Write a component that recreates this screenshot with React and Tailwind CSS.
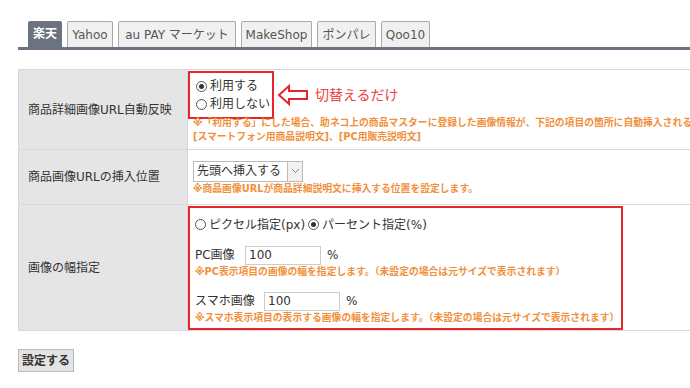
import React from 'react'

const FONT = { fontFamily: '"DejaVu Sans", "Noto Sans CJK JP", sans-serif' }

const tabs = [
  { label: '楽天', w: 'w-[34px]' },
  { label: 'Yahoo', w: 'w-[46px]' },
  { label: 'au PAY マーケット', w: 'w-[118px]' },
  { label: 'MakeShop', w: 'w-[71px]' },
  { label: 'ポンパレ', w: 'w-[59px]' },
  { label: 'Qoo10', w: 'w-[49px]' },
]

function Radio({ checked, label }) {
  return (
    <label className="flex items-center gap-[3px] whitespace-nowrap">
      <span className="flex h-[11px] w-[11px] items-center justify-center rounded-full border border-[#555] bg-white">
        {checked && <span className="h-[5px] w-[5px] rounded-full bg-[#333]" />}
      </span>
      <span>{label}</span>
    </label>
  )
}

function Note({ children }) {
  return <p className="whitespace-nowrap text-[9.8px] font-bold leading-[14px] text-[#f0903c]">{children}</p>
}

export default function App() {
  return (
    <div className="h-[388px] w-[690px] overflow-hidden bg-white text-[#333]" style={FONT}>
      {/* tabs */}
      <div className="ml-[18px] mt-[21px] flex items-end gap-[5px] border-b-[3px] border-[#6b7380] pl-[10px]">
        {tabs.map((t, i) => (
          <div
            key={t.label}
            className={
              i === 0
                ? `flex h-[26px] ${t.w} items-center justify-center rounded-t-[2px] bg-[#6b7380] text-[12px] font-bold text-white`
                : `flex h-[26px] ${t.w} items-center justify-center rounded-t-[2px] border border-b-0 border-[#aaa] bg-[#f0f0f0] text-[12px] text-[#555]`
            }
          >
            {t.label}
          </div>
        ))}
      </div>

      {/* form table */}
      <table className="ml-[18px] mt-[19px] w-[700px] border-collapse text-[12px]">
        <tbody>
          <tr className="h-[80px]">
            <th className="w-[169px] border border-[#d8d8d8] bg-[#e5e5e5] pl-[9px] text-left font-normal">
              商品詳細画像URL自動反映
            </th>
            <td className="border border-[#d8d8d8] pl-0 align-top">
              <div className="flex items-center pt-px">
                <div className="flex h-[48px] w-[86px] flex-col justify-center gap-[3px] border-2 border-[#e8242c] pl-[6px] text-[12px] leading-[15px]">
                  <Radio checked label="利用する" />
                  <Radio label="利用しない" />
                </div>
                <svg width="32" height="22" viewBox="0 0 32 22" className="ml-[3px]">
                  <polygon
                    points="2,11 12,2 12,7 30,7 30,15 12,15 12,20"
                    fill="white"
                    stroke="#e8242c"
                    strokeWidth="2"
                    strokeLinejoin="miter"
                  />
                </svg>
                <span className="ml-[6px] text-[14px] text-[#ec4141]">切替えるだけ</span>
              </div>
              <div className="mt-[-3px] pl-[5px]">
                <Note>※「利用する」にした場合、助ネコ上の商品マスターに登録した画像情報が、下記の項目の箇所に自動挿入される。</Note>
                <Note>[スマートフォン用商品説明文]、[PC用販売説明文]</Note>
              </div>
            </td>
          </tr>
          <tr className="h-[55px]">
            <th className="border border-[#d8d8d8] bg-[#e5e5e5] pl-[9px] text-left font-normal">
              商品画像URLの挿入位置
            </th>
            <td className="border border-[#d8d8d8] pl-[5px]">
              <div className="mt-[2px] flex h-[21px] w-[110px] items-stretch border border-[#bbb] bg-white text-[12px]">
                <span className="flex flex-1 items-center pl-[3px]">先頭へ挿入する</span>
                <span className="flex w-[15px] items-center justify-center border-l border-[#bbb] bg-[#f2f2f2]">
                  <svg width="9" height="6" viewBox="0 0 9 6">
                    <path d="M1 1 L4.5 4.5 L8 1" fill="none" stroke="#888" strokeWidth="1" />
                  </svg>
                </span>
              </div>
              <Note>※商品画像URLが商品詳細説明文に挿入する位置を設定します。</Note>
            </td>
          </tr>
          <tr className="h-[126px]">
            <th className="border border-[#d8d8d8] bg-[#e5e5e5] pl-[9px] text-left font-normal">
              画像の幅指定
            </th>
            <td className="border border-[#d8d8d8] py-0 pl-0 align-middle">
              <div className="flex h-[124px] w-[435px] flex-col border-2 border-[#e8242c] pl-[5px] text-[12px]">
                <div className="mt-[8px] flex items-center gap-[3px] text-[12px]">
                  <Radio label="ピクセル指定(px)" />
                  <Radio checked label="パーセント指定(%)" />
                </div>
                <div className="mt-[12px] flex items-center">
                  <span className="w-[50px]">PC画像</span>
                  <span className="flex h-[19px] w-[76px] items-center border border-[#ccc] pl-[3px]">100</span>
                  <span className="ml-[6px]">%</span>
                </div>
                <Note>※PC表示項目の画像の幅を指定します。（未設定の場合は元サイズで表示されます）</Note>
                <div className="mt-[13px] flex items-center">
                  <span className="w-[69px]">スマホ画像</span>
                  <span className="flex h-[19px] w-[76px] items-center border border-[#ccc] pl-[3px]">100</span>
                  <span className="ml-[6px]">%</span>
                </div>
                <Note>※スマホ表示項目の表示する画像の幅を指定します。（未設定の場合は元サイズで表示されます）</Note>
              </div>
            </td>
          </tr>
        </tbody>
      </table>

      <button
        type="button"
        className="ml-[18px] mt-[18px] h-[23px] border border-[#bbb] bg-[#e3e3e3] px-[3px] text-[12px] font-bold text-[#333]"
      >
        設定する
      </button>
    </div>
  )
}
